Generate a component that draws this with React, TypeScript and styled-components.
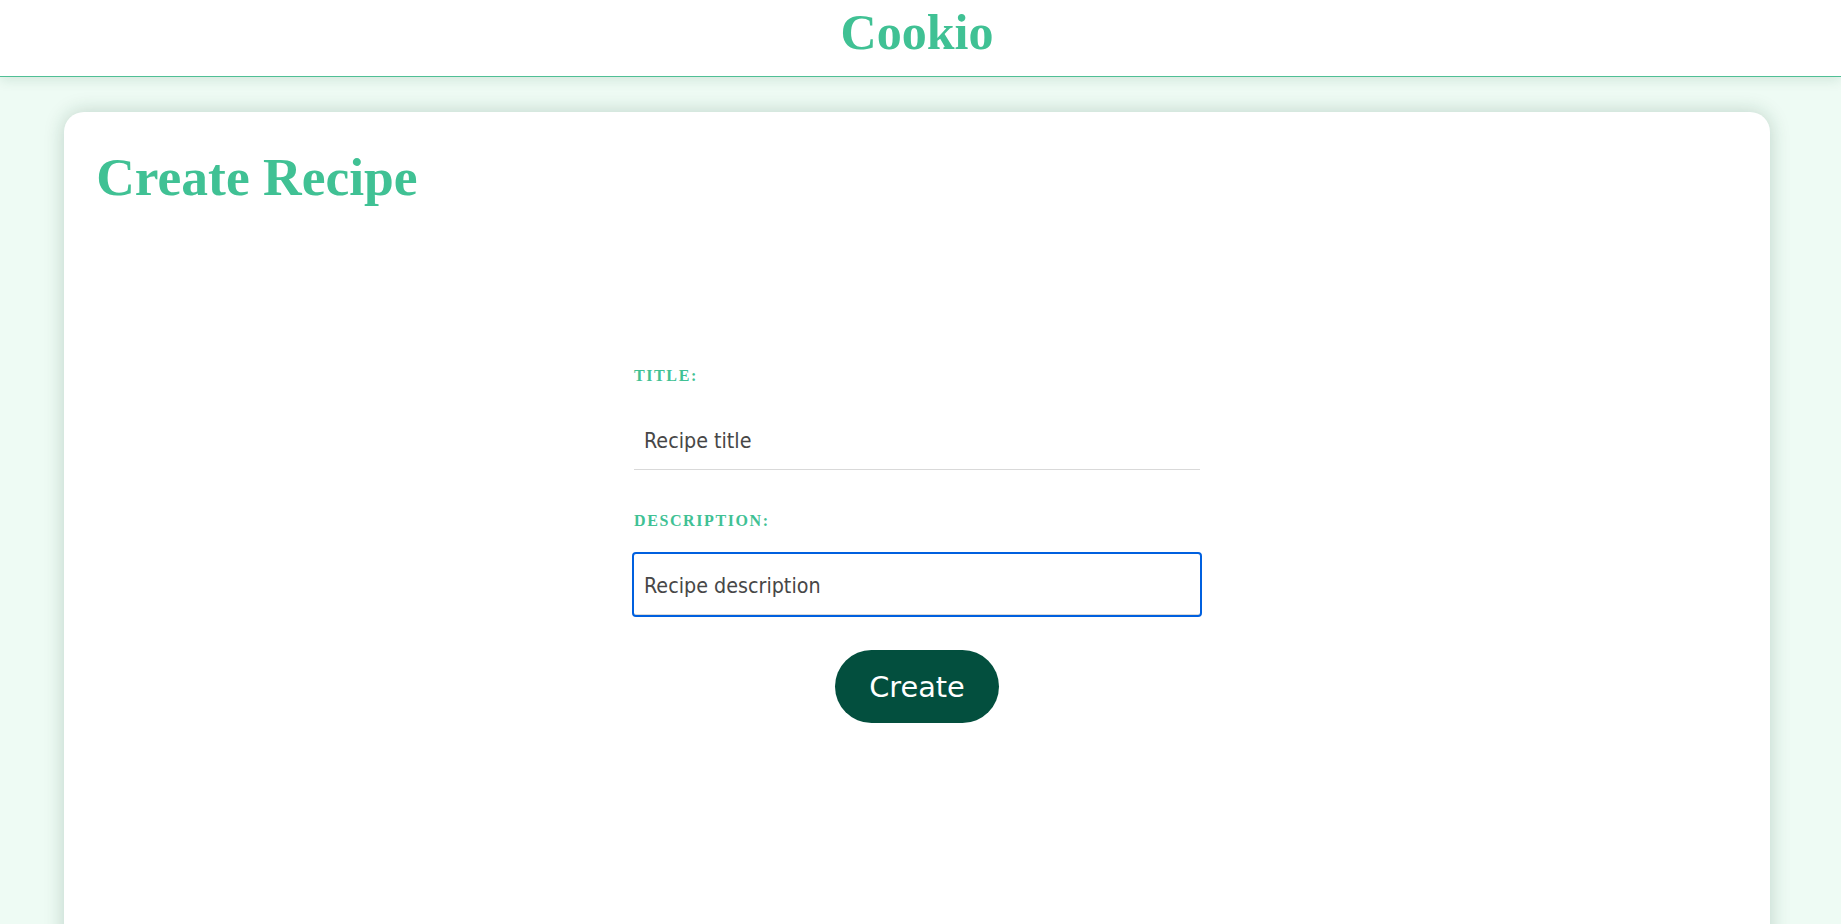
import React from "react";
import styled, { createGlobalStyle } from "styled-components";

const GlobalStyle = createGlobalStyle`
  html {
    background: #eefbf4;
  }
  html::-webkit-scrollbar {
    width: 7px;
    background: transparent;
  }
  html::-webkit-scrollbar-track {
    background: transparent;
    margin: 13px 0;
  }
  html::-webkit-scrollbar-thumb {
    background: #8a8a8a;
    border-left: 1px solid transparent;
    border-right: 3px solid transparent;
    background-clip: padding-box;
  }
  body {
    margin: 0;
    background: #eefbf4;
    font-family: "Liberation Serif", "Times New Roman", serif;
  }
  * {
    box-sizing: border-box;
  }
`;

const Header = styled.header`
  height: 77px;
  padding: 3px 7px 0 0;
  background: #ffffff;
  border-bottom: 1px solid #50bf95;
  box-shadow: 0 3px 12px rgba(20, 80, 50, 0.12);
  text-align: center;
  position: relative;
  z-index: 1;
`;

const Brand = styled.h1`
  margin: 0;
  font-family: "Liberation Serif", "Times New Roman", serif;
  font-weight: 700;
  font-size: 50px;
  line-height: normal;
  color: #40c194;
`;

const Main = styled.main`
  padding: 35px 7px 34px 0;
`;

const Card = styled.section`
  width: 93%;
  margin: 0 auto;
  min-height: 930px;
  padding: 36px 32px;
  background: #ffffff;
  border-radius: 20px;
  box-shadow: 0 0 20px rgba(20, 70, 45, 0.22);
`;

const PageTitle = styled.h1`
  margin: 0;
  font-family: "Liberation Serif", "Times New Roman", serif;
  font-weight: 700;
  font-size: 53.5px;
  line-height: 59px;
  color: #40c194;
`;

const Form = styled.form`
  width: 566px;
  margin: 160px auto 0;
  display: flex;
  flex-direction: column;
  align-items: stretch;
`;

const Field = styled.div`
  display: flex;
  flex-direction: column;
  & + & {
    margin-top: 42px;
  }
`;

const Label = styled.label`
  display: block;
  margin-bottom: 24px;
  font-family: "Liberation Serif", "Times New Roman", serif;
  font-weight: 700;
  font-size: 16px;
  line-height: 18px;
  letter-spacing: 1.6px;
  text-transform: uppercase;
  color: #40c194;
`;

const TextInput = styled.input<{ $focused?: boolean }>`
  display: block;
  width: 100%;
  height: 61px;
  padding: 2px 10px 0;
  border: none;
  border-bottom: 1px solid #d9d9d9;
  border-radius: ${(p) => (p.$focused ? "2px" : "0")};
  background: #ffffff;
  font-family: "DejaVu Sans Condensed", "DejaVu Sans", sans-serif;
  font-stretch: condensed;
  font-size: 21.3px;
  color: #474747;
  caret-color: #333333;
  outline: ${(p) => (p.$focused ? "2px solid #0060df" : "none")};
  outline-offset: 0;
  &:focus {
    outline: 2px solid #0060df;
    outline-offset: 0;
  }
`;

const SubmitButton = styled.button`
  align-self: center;
  margin-top: 35px;
  height: 73px;
  padding: 0 34px;
  border: none;
  border-radius: 37px;
  background: #034f3e;
  color: #ffffff;
  font-family: "DejaVu Sans", sans-serif;
  font-size: 28.8px;
  cursor: pointer;
`;

export default function App() {
  const moveCaretToEnd = (e: React.FocusEvent<HTMLInputElement>) => {
    const len = e.currentTarget.value.length;
    e.currentTarget.setSelectionRange(len, len);
  };

  return (
    <>
      <GlobalStyle />
      <Header>
        <Brand>Cookio</Brand>
      </Header>
      <Main>
        <Card>
          <PageTitle>Create Recipe</PageTitle>
          <Form onSubmit={(e) => e.preventDefault()}>
            <Field>
              <Label htmlFor="title">Title:</Label>
              <TextInput id="title" type="text" defaultValue="Recipe title" />
            </Field>
            <Field>
              <Label htmlFor="description">Description:</Label>
              <TextInput
                id="description"
                type="text"
                defaultValue="Recipe description"
                $focused
                autoFocus
                onFocus={moveCaretToEnd}
              />
            </Field>
            <SubmitButton type="submit">Create</SubmitButton>
          </Form>
        </Card>
      </Main>
    </>
  );
}
